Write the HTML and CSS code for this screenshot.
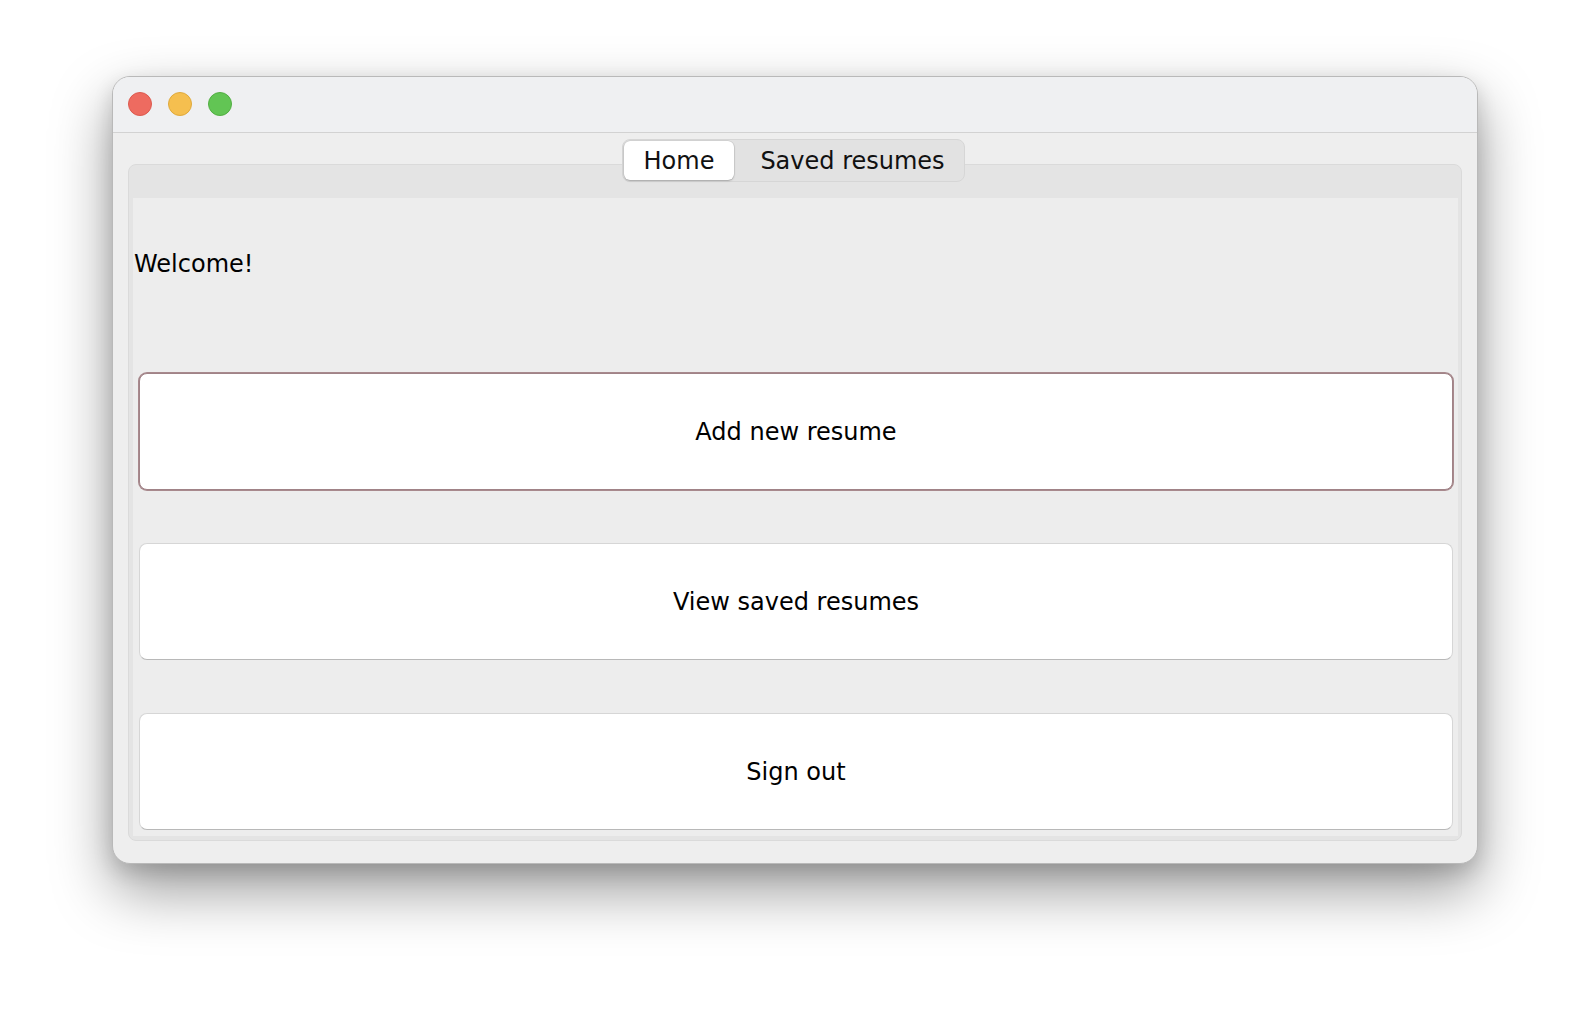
FILE: index.html
```html
<!DOCTYPE html>
<html lang="en">
<head>
<meta charset="utf-8">
<title>Resume App</title>
<link rel="stylesheet" href="styles.css">
</head>
<body>
<div class="window">
  <div class="titlebar">
    <span class="light red"></span>
    <span class="light yellow"></span>
    <span class="light green"></span>
  </div>
  <div class="winbody">
    <div class="tabs">
      <div class="tabbar">
        <div class="seg active">Home</div>
        <div class="seg other">Saved resumes</div>
      </div>
      <div class="pane">
        <div class="content">
          <div class="welcome">Welcome!</div>
          <div class="buttons">
            <div class="btn focused">Add new resume</div>
            <div class="btn">View saved resumes</div>
            <div class="btn">Sign out</div>
          </div>
        </div>
      </div>
    </div>
  </div>
</div>
</body>
</html>
```
FILE: styles.css
```css
* { box-sizing: border-box; }
html, body { margin: 0; padding: 0; }
body {
  width: 1590px;
  height: 1012px;
  background: #ffffff;
  padding: 76px 0 0 112px;
  font-family: "DejaVu Sans", "Liberation Sans", sans-serif;
  color: #000;
  overflow: hidden;
}
.window {
  width: 1366px;
  height: 788px;
  border: 1px solid #b9b9b9;
  border-radius: 18px;
  background: #eeeeee;
  overflow: hidden;
  box-shadow: 0 26px 60px rgba(0,0,0,0.4), 0 8px 20px rgba(0,0,0,0.14);
  display: flex;
  flex-direction: column;
}
.titlebar {
  height: 56px;
  flex: none;
  background: #eff0f2;
  border-bottom: 1px solid #d2d2d2;
  display: flex;
  align-items: center;
  gap: 16px;
  padding-left: 15px;
  padding-bottom: 1px;
}
.light {
  width: 24px;
  height: 24px;
  border-radius: 50%;
  display: block;
}
.red { background: #ee6b60; border: 1px solid #dc5a4f; }
.yellow { background: #f5bf4f; border: 1px solid #dfa93c; }
.green { background: #62c554; border: 1px solid #52ae43; }
.winbody {
  flex: 1;
  padding: 6px 15px 22px 15px;
}
.tabs {
  display: flex;
  flex-direction: column;
  align-items: center;
}
.tabbar {
  position: relative;
  z-index: 1;
  display: flex;
  width: 343px;
  height: 43px;
  padding: 1px;
  background: #e2e2e2;
  border: 1px solid #d6d6d6;
  border-radius: 8px;
  margin-bottom: -18px;
  margin-right: 3px;
}
.seg {
  display: flex;
  align-items: center;
  justify-content: center;
  font-size: 24px;
  line-height: 28px;
  color: #111;
  border-radius: 6px;
}
.seg.active {
  width: 110px;
  background: #ffffff;
  box-shadow: 0 1px 2px rgba(0,0,0,0.22), 0 0 0 0.5px rgba(0,0,0,0.12);
}
.seg.other {
  flex: 1;
  padding-left: 8px;
}
.pane {
  width: 1334px;
  height: 677px;
  border: 1px solid #dadada;
  border-radius: 8px;
  background: #e4e4e4;
  padding: 33px 3px 4px 4px;
}
.content {
  height: 638px;
  background: #ededed;
  padding-top: 52px;
}
.welcome {
  font-size: 24px;
  line-height: 28px;
  padding-left: 1px;
  height: 28px;
}
.buttons {
  margin-top: 95px;
  padding: 0 5px 0 6px;
  display: flex;
  flex-direction: column;
  gap: 53px;
}
.btn {
  height: 117px;
  background: #ffffff;
  border: 1px solid #d6d6d6;
  border-bottom-color: #b8b8b8;
  border-radius: 8px;
  display: flex;
  align-items: center;
  justify-content: center;
  font-size: 24px;
  line-height: 28px;
  color: #000;
}
.btn.focused {
  border-color: #a08387;
  box-shadow: 0 0 0 1px #a8898d;
}
```
